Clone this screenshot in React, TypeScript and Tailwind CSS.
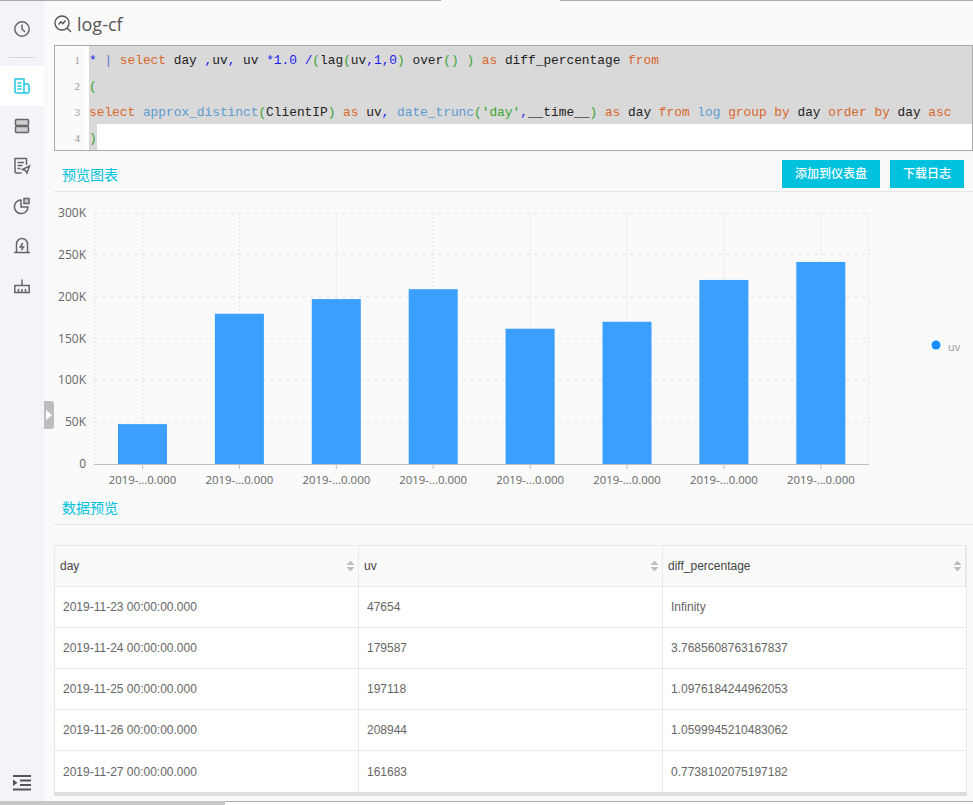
import React from 'react';

const SANS = 'font-["Open_Sans","Noto_Sans_CJK_SC",sans-serif]';

// token colours for the sql editor
const K = 'text-[#d9662b]';
const F = 'text-[#5c9bcf]';
const G = 'text-[#3aa52f]';
const B = 'text-[#1a1aee]';

type Tok = [string, string?];

const codeLines: Tok[][] = [
  [['*', B], [' '], ['|', 'text-[#5b78d8]'], [' '], ['select', K], [' day '], [',', B], ['uv'], [',', B], [' uv '], ['*1.0', B], [' '], ['/', B], ['(', G], ['lag'], ['(', G], ['uv'], [',', B], ['1', B], [',', B], ['0', B], [')', G], [' over'], ['()', G], [' '], [')', G], [' '], ['as', K], [' diff_percentage '], ['from', K]],
  [['(', G]],
  [['select', K], [' '], ['approx_distinct', F], ['(', G], ['ClientIP'], [')', G], [' '], ['as', K], [' uv'], [',', B], [' '], ['date_trunc', F], ['(', G], ["'day'", G], [',', B], ['__time__'], [')', G], [' '], ['as', K], [' day '], ['from', K], [' '], ['log', F], [' '], ['group', K], [' '], ['by', K], [' day '], ['order', K], [' '], ['by', K], [' day '], ['asc', K]],
  [[')', G]],
];

const rows = [
  ['2019-11-23 00:00:00.000', '47654', 'Infinity'],
  ['2019-11-24 00:00:00.000', '179587', '3.7685608763167837'],
  ['2019-11-25 00:00:00.000', '197118', '1.0976184244962053'],
  ['2019-11-26 00:00:00.000', '208944', '1.0599945210483062'],
  ['2019-11-27 00:00:00.000', '161683', '0.7738102075197182'],
];

const chartValues = [47654, 179587, 197118, 208944, 161683, 170000, 220000, 241500];
const yTicks = [0, 50, 100, 150, 200, 250, 300];
const STEP = 96.9;
const toY = (v: number) => 464 - (v / 300000) * 251;

const Chart = () => (
  <svg viewBox="54 192 919 300" className="block h-[300px] w-[919px]" fontFamily="'Open Sans', sans-serif" fontSize="12">
    {yTicks.slice(1).map((t) => (
      <line key={t} x1="94" x2="869" y1={toY(t * 1000)} y2={toY(t * 1000)} stroke="#e8e8e8" strokeDasharray="4 4" />
    ))}
    <line x1="94.5" x2="94.5" y1="213" y2="464" stroke="#e3e3e3" strokeDasharray="2 2" />
    <line x1="868.5" x2="868.5" y1="213" y2="464" stroke="#e3e3e3" strokeDasharray="2 2" />
    {chartValues.map((_, i) => (
      <line key={i} x1={142.5 + i * STEP} x2={142.5 + i * STEP} y1="213" y2="464" stroke="#e3e3e3" strokeDasharray="2 2" />
    ))}
    {chartValues.map((v, i) => (
      <rect key={i} x={118 + i * STEP} y={toY(v)} width="49" height={464 - toY(v)} fill="#3a9fff" />
    ))}
    <line x1="94" x2="869" y1="464.5" y2="464.5" stroke="#bfbfbf" />
    {chartValues.map((_, i) => (
      <g key={i}>
        <line x1={142.5 + i * STEP} x2={142.5 + i * STEP} y1="465" y2="469" stroke="#bfbfbf" />
        <text x={142.5 + i * STEP} y="484" textAnchor="middle" fontSize="11.4" fill="#666">2019-...0.000</text>
      </g>
    ))}
    {yTicks.map((t) => (
      <text key={t} x="86" y={toY(t * 1000) + 4} textAnchor="end" fill="#666">{t === 0 ? '0' : `${t}K`}</text>
    ))}
    <circle cx="936" cy="345" r="4.5" fill="#1890ff" />
    <text x="948" y="351" fontSize="11" fill="#999">uv</text>
  </svg>
);

const SortCaret = () => (
  <svg width="9" height="12" viewBox="0 0 9 12" className="shrink-0">
    <path d="M4.5 0.5 L8.5 5 H0.5 Z M0.500 7 H8.500 L4.500 11.500 Z" fill="#bfbfbf" />
  </svg>
);

const NavIcon = ({ children, active }: { children: React.ReactNode; active?: boolean }) => (
  <div className={`flex h-10 w-11 items-center justify-center ${active ? 'bg-white' : ''}`}>
    <svg width="18" height="18" viewBox="0 0 18 18" fill="none" stroke={active ? '#1fc8e3' : '#666'} strokeWidth="1.5">
      {children}
    </svg>
  </div>
);

const SectionTitle = ({ title, children, className }: { title: string; children?: React.ReactNode; className?: string }) => (
  <div className={`flex items-end justify-between border-b border-[#e8e8e8] ${className}`}>
    <span className="ml-2 pb-[6px] text-sm leading-[20px] text-[#00c1de]">{title}</span>
    {children}
  </div>
);

export default function App() {
  return (
    <div className={`relative flex h-[805px] w-[973px] overflow-hidden bg-[#fafafa] ${SANS}`}>
      {/* sidebar */}
      <div className="flex w-11 shrink-0 flex-col items-center bg-[#f2f4f9] pt-[9px]">
        <NavIcon>
          <circle cx="9" cy="9" r="7.2" />
          <path d="M9 4.500V9l3 3" />
        </NavIcon>
        <div className="my-2 h-px w-[26px] bg-[#d5d5d5]" />
        <NavIcon active>
          <path d="M2 2h9v14H3.500A1.500 1.500 0 0 1 2 14.500z" />
          <path d="M11 7h3.500A1.500 1.500 0 0 1 16 8.500V14.500a1.500 1.500 0 0 1-1.500 1.500H11" />
          <path d="M4.500 6h4M4.500 9h4M4.500 12h4" />
        </NavIcon>
        <NavIcon>
          <rect x="2.500" y="2.500" width="13" height="6" rx="1" fill="#888" fillOpacity=".35" />
          <rect x="2.500" y="9.500" width="13" height="6" rx="1" fill="#888" fillOpacity=".35" />
        </NavIcon>
        <NavIcon>
          <path d="M8.500 16H3.500A1.500 1.500 0 0 1 2 14.500V1.500h11.500V8" />
          <path d="M4.500 5.500h6.500M4.500 8.500h5M4.500 11.500h3" />
          <path d="M9.500 12.500l7-3.500-2.500 7-1.500-2.500z" />
        </NavIcon>
        <NavIcon>
          <path d="M8 3a6.800 6.800 0 1 0 7 7H8z" />
          <path d="M11 1.500h5v5h-5z" fill="#999" fillOpacity=".4" />
        </NavIcon>
        <NavIcon>
          <path d="M3.500 15.500V7a5.500 5.500 0 0 1 11 0v8.500" />
          <path d="M1 15.500h16" />
          <path d="M9.800 6L7.300 10h3.200l-2.200 3.200" />
        </NavIcon>
        <NavIcon>
          <path d="M1.800 8.500h14.400v7H1.800z" />
          <path d="M9 2.500v6M5.500 12v3.500M9 12v3.500M12.500 12v3.500" />
        </NavIcon>
        <div className="mt-auto pb-[14px]">
          <svg width="18" height="16" viewBox="0 0 18 16" fill="#555">
            <path d="M0 0h18v2H0zM7 4.500h11v2H7zM7 9h11v2H7zM0 13.500h18v2H0zM0 4.500l4.500 3.250L0 11z" />
          </svg>
        </div>
      </div>

      {/* main column */}
      <div className="flex min-w-0 flex-1 flex-col pl-2.5">
        <div className="flex h-[45px] items-center gap-[5px] pb-[1px] pt-[3px]">
          <svg width="18" height="18" viewBox="0 0 18 18" fill="none" stroke="#555" strokeWidth="1.4">
            <circle cx="8" cy="8" r="7" />
            <path d="M13 13l4 4" />
            <path d="M4.500 9.500L7 6.800l1.800 2L11.500 5.500" />
          </svg>
          <span className="text-lg leading-6 text-[#555]">log-cf</span>
        </div>

        {/* sql editor */}
        <div className="flex h-[106px] border border-[#aaa] bg-white font-['Liberation_Mono',monospace] text-[12.83px]">
          <div className="w-[29px] shrink-0 bg-[#fafafa]">
            {codeLines.map((_, i) => (
              <div key={i} className="h-[26px] pr-[4px] text-right font-['Liberation_Serif',serif] text-[11px] leading-[28px] text-[#999]">{i + 1}</div>
            ))}
          </div>
          <div className="ml-[5px] flex min-w-0 flex-1 flex-col">
            {codeLines.map((line, i) => (
              <div key={i} className={`h-[26px] whitespace-pre leading-[30px] text-[#222] ${i === 3 ? 'w-[8px] bg-[#d9d9d9]' : 'bg-[#d9d9d9]'}`}>
                {line.map(([text, cls], j) => (
                  <span key={j} className={cls}>{text}</span>
                ))}
              </div>
            ))}
          </div>
        </div>

        <SectionTitle title="预览图表" className="h-[41px]">
          <div className="mb-[3px] mr-[9px] flex gap-2.5">
            <button className="h-7 w-[98px] bg-[#00c1de] text-xs font-medium text-white">添加到仪表盘</button>
            <button className="h-7 w-[74px] bg-[#00c1de] text-xs font-medium text-white">下载日志</button>
          </div>
        </SectionTitle>

        <Chart />

        <SectionTitle title="数据预览" className="h-[33px]" />

        {/* table */}
        <div className="mr-[6px] mt-5 border-b-[4px] border-b-[#dedede]">
          <div className="grid grid-cols-[304px_304px_303px] border-l border-r border-t border-[#e8e8e8] font-['Liberation_Sans',sans-serif] text-xs">
            {['day', 'uv', 'diff_percentage'].map((h) => (
              <div key={h} className="flex h-[41px] items-center justify-between border-b border-r border-[#e8e8e8] pl-[5px] pr-[3px] text-[#444] last:border-r-0">
                <span>{h}</span>
                <SortCaret />
              </div>
            ))}
            {rows.map((row, i) =>
              row.map((cell, j) => (
                <div
                  key={`${i}-${j}`}
                  className={`flex h-[41px] items-center border-r border-[#e8e8e8] bg-white pl-2 text-[#666] ${j === 2 ? 'border-r-0' : ''} ${i < rows.length - 1 ? 'border-b' : ''}`}
                >
                  {cell}
                </div>
              )),
            )}
          </div>
        </div>
      </div>

      {/* collapse handle over the sidebar edge */}
      <div className="absolute left-11 top-[401px] flex h-[28px] w-[10px] items-center justify-center rounded-r-[3px] bg-[#bdbdbd]">
        <div className="h-0 w-0 border-y-[5px] border-l-[6px] border-y-transparent border-l-white" />
      </div>

      {/* window chrome lines */}
      <div className="absolute left-0 top-0 h-px w-[441px] bg-[#aaa]" />
      <div className="absolute left-[560px] top-0 h-px w-[413px] bg-[#aaa]" />
      <div className="absolute bottom-0 left-0 flex h-1 w-full bg-white">
        <div className="h-full w-[225px] bg-[#c8c8c8]" />
        <div className="h-px flex-1 bg-[#aaa]" />
      </div>
    </div>
  );
}
